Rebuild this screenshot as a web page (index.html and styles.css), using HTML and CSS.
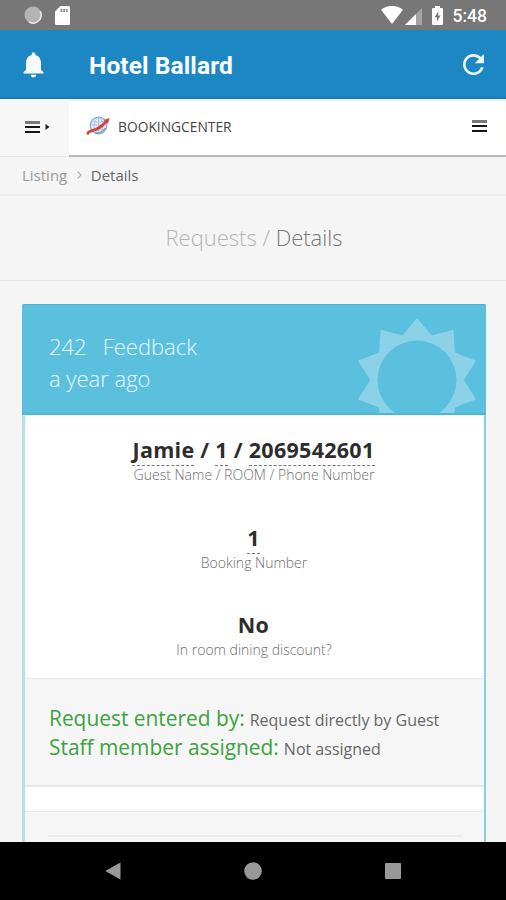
FILE: index.html
```html
<!DOCTYPE html>
<html lang="en">
<head>
<meta charset="utf-8">
<title>Hotel Ballard</title>
<link rel="stylesheet" href="styles.css">
</head>
<body>
<div class="screen">
  <div class="status">
    <svg class="status-dot" width="18" height="18" viewBox="0 0 18 18"><circle cx="9" cy="9" r="8.500" fill="#b4b4b4"/><path d="M16 5.200A8 8 0 0 1 5 16" fill="none" stroke="#e5e5e5" stroke-width="1.600"/></svg>
    <svg class="status-sd" width="15" height="19" viewBox="0 0 15 19"><path fill="#fff" d="M5.500 0H13.500a1.500 1.500 0 0 1 1.500 1.500v16a1.500 1.500 0 0 1-1.500 1.500H1.500A1.500 1.500 0 0 1 0 17.500V5.500z"/><path fill="#888" d="M5.500 3h1.800v3H5.500zM8.300 3h1.800v3H8.300zM11.100 3h1.500v3h-1.500z"/></svg>
    <svg class="status-wifi" width="22" height="18" viewBox="0 0 22 18"><path fill="#fff" d="M0 3.800C6.500-1.300 15.500-1.300 22 3.800L11 18z"/></svg>
    <svg class="status-cell" width="17" height="17" viewBox="0 0 17 17"><path fill="#a4a4a4" d="M17 0v17H0z"/><path fill="#fff" d="M11 6v11H0z"/></svg>
    <svg class="status-battery" width="11" height="19" viewBox="0 0 11 19"><path fill="#fff" d="M3 0h5v2h2a1 1 0 0 1 1 1v15a1 1 0 0 1-1 1H1a1 1 0 0 1-1-1V3a1 1 0 0 1 1-1h2z"/><path fill="#777" d="M6.400 5.200 2.600 11.200h2.300V15.600L8.500 9.600H6.200z"/></svg>
    <span class="clock">5:48</span>
  </div>

  <header class="appbar">
    <svg class="bell" width="21" height="26" viewBox="0 0 21 26"><path fill="#f7fafc" d="M10.500 25.300a2.600 2.600 0 0 0 2.600-2.600H7.900a2.600 2.600 0 0 0 2.600 2.600zM18 17.700V11c0-4-2.100-7.300-5.700-8.100v-.9a1.800 1.800 0 0 0-3.600 0v.9C5.100 3.700 3 7 3 11v6.700L.5 20.200v1.300h20v-1.300z"/></svg>
    <h1 class="hotel">Hotel Ballard</h1>
    <svg class="refresh" width="21" height="21" viewBox="4 4 16 16"><path fill="#eef6fb" d="M17.650 6.350C16.200 4.900 14.210 4 12 4c-4.420 0-7.990 3.580-7.990 8s3.570 8 7.990 8c3.730 0 6.840-2.550 7.730-6h-2.080c-.820 2.330-3.040 4-5.650 4-3.310 0-6-2.690-6-6s2.690-6 6-6c1.660 0 3.140.690 4.220 1.780L13 11h7V4z"/></svg>
  </header>

  <nav class="brandbar">
    <div class="side-toggle">
      <span class="burger"><i></i><i></i><i></i></span>
      <svg width="5" height="6" viewBox="0 0 5 6"><path d="M.5 0 4.500 3 .5 6z" fill="#222"/></svg>
    </div>
    <div class="brand">
      <svg class="logo" width="24" height="20" viewBox="0 0 24 20">
        <circle cx="12.500" cy="9.500" r="8.300" fill="#e3edf6" stroke="#86a8cc" stroke-width="1.300"/>
        <path d="M12.500 1v17M4 9h17M6 4.500c4 2.200 9 2.200 13 0M6 14.500c4-2 9-2 13 0M12.500 1c-6 4-6 13 0 17M12.500 1c6 4 6 13 0 17" fill="none" stroke="#9db9d8" stroke-width=".8"/>
        <path d="M.6 18.500C0 15.800 2.500 14 6.500 13 11.500 11.700 15.500 8.500 19 4.800l-1.500-.8L23.500 2 22 8l-1.200-1.500C17 11.500 12.500 14.500 8 15.500 5 16.200 3 17 2.800 18.800z" fill="#d4433c"/>
        <path d="M9 17c4 .5 8-1.500 10.500-5" fill="none" stroke="#6d8fba" stroke-width="1.200"/>
      </svg>
      <span class="brand-name">BOOKINGCENTER</span>
      <span class="burger burger-right"><i></i><i></i><i></i></span>
    </div>
  </nav>

  <div class="crumbs">
    <span class="crumb">Listing</span>
    <svg width="5" height="8" viewBox="0 0 5 8"><path d="M.7.700 4 4 .7 7.300" fill="none" stroke="#aaa" stroke-width="1.100"/></svg>
    <span class="crumb-current">Details</span>
  </div>

  <div class="page-title"><h2><span>Requests /</span> Details</h2></div>

  <main class="content">
    <section class="card">
      <div class="card-head">
        <div class="head-text">
          <div><span class="ticket">242</span><span class="kind">Feedback</span></div>
          <div class="age">a year ago</div>
        </div>
        <svg class="sun" width="120" height="97" viewBox="-60 -63 120 97"><path fill="#8bd2e8" fill-rule="evenodd" d="M0-62 14.500-44.500 36.400-50.200 37.900-27.500 59-19.200 46.700 0 59 19.200 37.900 27.500 36.400 50.200 14.500 44.500 0 62-14.500 44.500-36.400 50.200-37.900 27.500-59 19.200-46.700 0-59-19.200-37.900-27.500-36.400-50.200-14.500-44.500zM39.500 0A39.500 39.500 0 1 0-39.500 0A39.500 39.500 0 1 0 39.500 0z"/></svg>
      </div>
      <div class="facts">
        <div class="fact"><strong class="guest"><u>Jamie</u> / <u>1</u> / <u>2069542601</u></strong><small>Guest Name / ROOM / Phone Number</small></div>
        <div class="fact"><strong><u>1</u></strong><small>Booking Number</small></div>
        <div class="fact"><strong>No</strong><small>In room dining discount?</small></div>
      </div>
      <div class="staff">
        <p><b>Request entered by:</b><span>Request directly by Guest</span></p>
        <p><b>Staff member assigned:</b><span>Not assigned</span></p>
      </div>
      <div class="gap"></div>
      <div class="next"><hr></div>
    </section>
  </main>

  <footer class="navbar">
    <svg width="16" height="18" viewBox="0 0 16 18"><path d="M15.500.5v17L.3 9z" fill="#999"/></svg>
    <svg width="18" height="18" viewBox="0 0 18 18"><circle cx="9" cy="9" r="8.800" fill="#999"/></svg>
    <svg width="16" height="16" viewBox="0 0 16 16"><rect width="16" height="16" rx=".7" fill="#999"/></svg>
  </footer>
</div>
</body>
</html>
```

FILE: styles.css
```css
* { box-sizing: border-box; }
body { margin: 0; font-family: "Open Sans", sans-serif; color: #444; }
h1, h2, p { margin: 0; }
svg { display: block; flex: none; }
span, b, strong, small, h1, h2 { white-space: nowrap; }

.screen { width: 506px; height: 900px; display: flex; flex-direction: column; overflow: hidden; background: #f5f5f5; }

.status { height: 30px; flex: none; display: flex; align-items: center; background: #777; padding: 0 19px 0 24px; }
.status-sd { margin-left: 13px; }
.status-wifi { margin-left: auto; }
.status-cell { margin: 2px 0 0 2px; }
.status-battery { margin-left: 10px; }
.clock { margin: 2px 0 0 10px; color: #fff; font: 500 17.5px/24px Roboto, sans-serif; }

.appbar { height: 69px; flex: none; display: flex; align-items: center; background: #1d87c4; border-bottom: 2px solid #137cb9; padding: 2px 22px 0 23px; }
.hotel { margin: 2px 0 0 45px; color: #fff; font: 700 24.5px/32px Roboto, sans-serif; letter-spacing: 0.1px; }
.refresh { margin-left: auto; }

.brandbar { height: 58px; flex: none; display: flex; background: #fff; box-shadow: inset 0 2px 2px #f1eee8; }
.side-toggle { width: 69px; display: flex; align-items: center; gap: 5px; padding: 0 0 2px 25px; background: #f7f7f7; border-bottom: 1px solid #e8e8e8; }
.burger { width: 15px; display: flex; flex-direction: column; gap: 3px; }
.burger i { height: 2px; background: #151515; }
.burger i:first-child { height: 3px; margin-bottom: -1px; background: #777; }
.brand { flex: 1; display: flex; align-items: center; padding: 0 19px 2px 17px; border-bottom: 2px solid #b7b7b7; }
.brand-name { margin-left: 8px; color: #444; font-size: 13.8px; }
.burger-right { margin-left: auto; }

.crumbs { height: 39px; flex: none; display: flex; align-items: center; padding: 0 0 2px 22px; border-bottom: 2px solid #eee; background: #f5f5f5; font-size: 15px; }
.crumb { color: #999; margin-right: 10px; }
.crumb-current { color: #666; margin-left: 8.5px; }

.page-title { height: 85px; flex: none; display: flex; align-items: center; justify-content: center; padding-bottom: 2px; border-bottom: 1px solid #e3e3e3; }
.page-title h2 { padding-left: 2px; color: #777; font-size: 22px; font-weight: 300; line-height: 32px; }
.page-title h2 span { color: #b4b4b4; }

.content { flex: 1; min-height: 0; padding: 23px 20px 0 22px; overflow: hidden; }
.card { height: 100%; display: flex; flex-direction: column; border: 2px solid #8bcfe2; border-width: 0 2px 0 3px; border-left-color: #bbdfe9; border-radius: 2px 2px 0 0; background: #fff; }
.card-head { height: 111px; flex: none; display: flex; justify-content: space-between; margin: 0 -2px 0 -3px; padding: 12px 9px 0 27px; background: #5bc0de; border-top: 1px solid #4db5d4; border-bottom: 2px solid #4db7d7; border-radius: 2px 2px 0 0; overflow: hidden; }
.head-text { padding-top: 14px; color: #e7f8fd; font-size: 22px; font-weight: 300; line-height: 31.5px; }
.kind { margin-left: 16px; }

.facts { height: 263px; flex: none; padding: 21px 2px 0 0; }
.fact { height: 87.5px; display: flex; flex-direction: column; align-items: center; }
.fact strong { height: 30px; color: #2d2d2d; font-size: 21.5px; font-weight: 700; line-height: 28px; letter-spacing: 0.28px; }
.fact u { display: inline-block; height: 30px; text-decoration: none; border-bottom: 1px dashed #777; }
.fact small { margin-left: 1px; color: #6c6c6c; font-size: 14px; font-weight: 300; line-height: 18px; }

.staff { height: 109px; flex: none; padding: 25px 24px 0 24px; background: #f6f6f6; border-top: 1px solid #e8e8e8; border-bottom: 2px solid #e8e8e8; }
.staff p { height: 29px; display: flex; align-items: baseline; line-height: 29px; }
.staff b { color: #3ca33f; font-size: 20.9px; font-weight: 400; }
.staff p span { margin-left: 5px; color: #666; font-size: 16px; }
.gap { height: 24px; flex: none; }
.next { flex: 1; padding: 23px 22px 0 23px; background: #f6f6f6; border-top: 1px solid #e8e8e8; }
.next hr { height: 2px; margin: 0; border: 0; background: #ebebeb; }

.navbar { height: 58px; flex: none; display: flex; align-items: center; justify-content: space-between; padding: 0 105px; background: #000; }
```
